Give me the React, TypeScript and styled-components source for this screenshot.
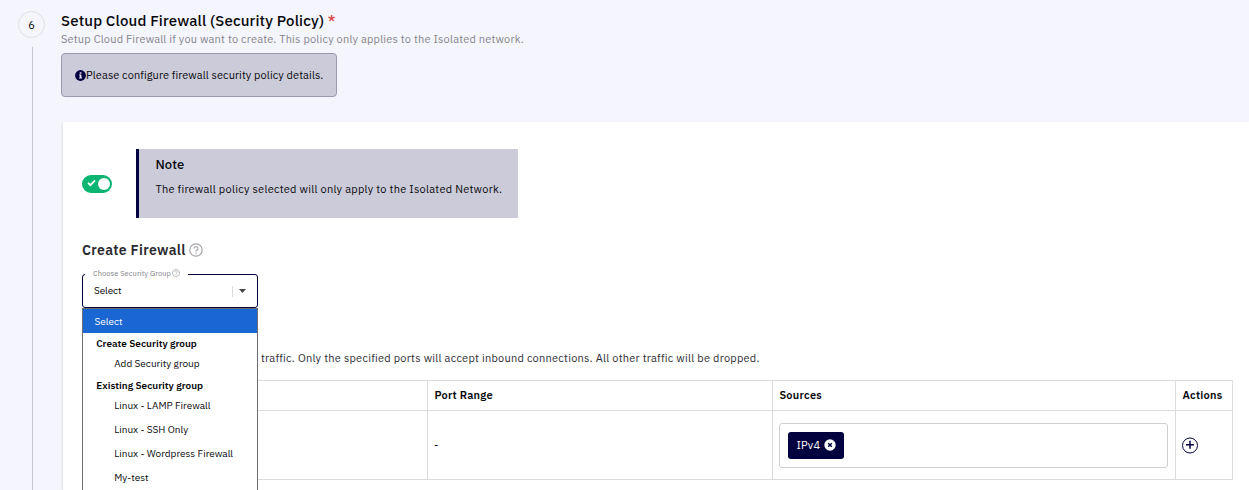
import React from "react";
import styled, { createGlobalStyle } from "styled-components";

const navy = "#02023f";

const GlobalStyle = createGlobalStyle`
  *, *::before, *::after { box-sizing: border-box; }
  body {
    margin: 0;
    background: #f5f5fd;
    color: #08080c;
    font-family: "IBM Plex Sans", Roboto, "Liberation Sans", sans-serif;
    font-size: 11px;
    overflow: hidden;
  }
`;

const Page = styled.div`
  display: flex;
  height: 490px;
  overflow: hidden;
`;

const StepRail = styled.div`
  display: flex;
  flex-direction: column;
  align-items: center;
  width: 27px;
  margin: 11px 16px 0 18px;
`;

const StepNumber = styled.div`
  display: flex;
  align-items: center;
  justify-content: center;
  flex: none;
  width: 27px;
  height: 27px;
  border: 1px solid #dfdfe6;
  border-radius: 50%;
`;

const StepLine = styled.div`
  flex: 1;
  width: 1px;
  margin: 9px 0 0 1px;
  background: #c6c6cb;
`;

const Content = styled.div`
  display: flex;
  flex-direction: column;
  flex: 1;
  min-width: 0;
  padding-top: 11px;
`;

const Line = styled.div<{ $size?: number; $weight?: number; $height: number; $spacing?: number; $color?: string }>`
  font-size: ${(p) => p.$size ?? 11}px;
  font-weight: ${(p) => p.$weight ?? 400};
  line-height: ${(p) => p.$height}px;
  letter-spacing: ${(p) => p.$spacing ?? 0}px;
  color: ${(p) => p.$color ?? "inherit"};
  white-space: nowrap;
`;

const Required = styled.span`
  color: #d9453f;
`;

const InfoAlert = styled.div`
  display: flex;
  align-items: center;
  width: 276px;
  height: 44px;
  margin-top: 6px;
  padding-left: 13px;
  border: 1px solid #9a99b2;
  border-radius: 4px;
  background: #cccbd9;
`;

const Panel = styled.section`
  flex: 1;
  margin: 25px 0 0 2px;
  padding: 27px 16px 0 19px;
  background: #fff;
  box-shadow: -1px 1px 2px rgba(60, 60, 110, 0.1);
`;

const NoteRow = styled.div`
  display: flex;
  align-items: center;
  gap: 24px;
`;

const Toggle = styled.div`
  display: flex;
  align-items: center;
  justify-content: space-between;
  width: 30px;
  height: 18px;
  padding: 0 2px 0 5px;
  border-radius: 9px;
  background: #0ab471;
`;

const CheckMark = styled.svg`
  margin-bottom: 2px;
`;

const Knob = styled.span`
  width: 12px;
  height: 12px;
  border-radius: 50%;
  background: #fff;
`;

const Note = styled.div`
  width: 382px;
  height: 69px;
  padding: 6px 0 0 16.4px;
  border-left: 3px solid ${navy};
  background: #cccbd9;
`;

const SectionHeading = styled.div`
  display: flex;
  align-items: center;
  gap: 3.5px;
  height: 20px;
  margin-top: 22px;
`;

const SelectField = styled.div`
  position: relative;
  display: flex;
  align-items: center;
  width: 176px;
  height: 34px;
  margin-top: 14px;
  padding: 0 11px 0 11px;
  border: 1px solid ${navy};
  border-radius: 3px;
`;

const SelectLabel = styled.div`
  position: absolute;
  top: -7px;
  left: 2px;
  display: flex;
  align-items: center;
  gap: 1px;
  width: 103px;
  height: 10px;
  padding-left: 8px;
  background: #fff;
`;

const Caret = styled.div`
  display: flex;
  align-items: center;
  justify-content: flex-end;
  width: 14px;
  height: 11px;
  margin-left: auto;
  border-left: 1px solid #dcdce0;
`;

const Menu = styled.div`
  position: absolute;
  top: 33px;
  left: -1px;
  z-index: 2;
  width: 176px;
  height: 200px;
  border: 1px solid #6d6d73;
  background: #fff;
`;

const Option = styled.div<{ $kind: "selected" | "group" | "item"; $height: number }>`
  display: flex;
  align-items: center;
  height: ${(p) => p.$height}px;
  padding-top: ${(p) => (p.$kind === "selected" ? 2 : 0)}px;
  padding-left: ${(p) => ({ selected: 11.4, group: 13.2, item: 31.2 })[p.$kind]}px;
  color: ${(p) => (p.$kind === "selected" ? "#fff" : "#08080c")};
  background: ${(p) => (p.$kind === "selected" ? "#1a66d2" : "transparent")};
`;

const Hint = styled.div`
  margin: 42px 0 0 179px;
`;

const Table = styled.div`
  display: grid;
  grid-template-columns: 345px 345px 403px 57px;
  grid-template-rows: 30px 69px;
  width: 1151px;
  margin-top: 14px;
  border-top: 1px solid #dcdcdc;
  border-left: 1px solid #dcdcdc;
`;

const Cell = styled.div<{ $header?: boolean }>`
  display: flex;
  align-items: center;
  padding: 0 7px ${(p) => (p.$header ? 2 : 0)}px ${(p) => (p.$header ? 6.4 : 6)}px;
  border-right: 1px solid #dcdcdc;
  border-bottom: 1px solid #dcdcdc;
`;

const TagInput = styled.div`
  display: flex;
  align-items: center;
  flex: 1;
  height: 45px;
  padding-left: 8px;
  border: 1px solid #cfcfd2;
  border-radius: 3px;
`;

const Tag = styled.div`
  display: flex;
  align-items: center;
  gap: 4px;
  width: 56px;
  height: 27px;
  padding-left: 8.4px;
  border-radius: 3px;
  color: #fff;
  background: ${navy};
`;

const HelpIcon = ({ size, width }: { size: number; width: number }) => (
  <svg width={size} height={size} viewBox="0 0 14 14" fill="none" stroke="#a5a5aa" strokeWidth={width}>
    <circle cx="7" cy="7" r="6.2" />
    <path d="M5 5.6a2 1.8 0 1 1 2.9 1.5c-.7.4-.9.7-.9 1.3" />
    <path d="M7 9.4v1.3" />
  </svg>
);

const InfoIcon = () => (
  <svg width="11" height="11" viewBox="0 0 11 11">
    <circle cx="5.5" cy="5.5" r="5.4" fill={navy} />
    <path d="M4.7 2.2h1.7v1.5H4.7zM4.1 4.5h2.3v3h.6v1.1H4.1V7.5h.6v-2h-.6z" fill="#e6e5f0" />
  </svg>
);

const options = [
  { kind: "selected", text: "Select", height: 24 },
  { kind: "group", text: "Create Security group", height: 22 },
  { kind: "item", text: "Add Security group", height: 18 },
  { kind: "group", text: "Existing Security group", height: 26 },
  { kind: "item", text: "Linux - LAMP Firewall", height: 14 },
  { kind: "item", text: "Linux - SSH Only", height: 34 },
  { kind: "item", text: "Linux - Wordpress Firewall", height: 14 },
  { kind: "item", text: "My-test", height: 34 },
] as const;

const headers = ["", "Port Range", "Sources", "Actions"];

export default function App() {
  return (
    <Page>
      <GlobalStyle />
      <StepRail>
        <StepNumber>6</StepNumber>
        <StepLine />
      </StepRail>
      <Content>
        <Line $size={15} $weight={500} $height={20} $spacing={0.16}>
          Setup Cloud Firewall (Security Policy) <Required>*</Required>
        </Line>
        <Line $height={16} $spacing={0.19} $color="#85858c">
          Setup Cloud Firewall if you want to create. This policy only applies to the Isolated network.
        </Line>
        <InfoAlert>
          <InfoIcon />
          <Line $height={16} $spacing={0.08}>Please configure firewall security policy details.</Line>
        </InfoAlert>
        <Panel>
          <NoteRow>
            <Toggle>
              <CheckMark width="9" height="8" viewBox="0 0 9 8" fill="none" stroke="#fff" strokeWidth="1.8">
                <path d="M1 3.8 3.4 6.2 8 1.4" />
              </CheckMark>
              <Knob />
            </Toggle>
            <Note>
              <Line $size={13} $weight={500} $height={20} $spacing={0.1}>Note</Line>
              <Line $height={29} $spacing={0.25}>The firewall policy selected will only apply to the Isolated Network.</Line>
            </Note>
          </NoteRow>
          <SectionHeading>
            <Line $size={14} $weight={600} $height={20} $spacing={0.33} $color="#28282f">Create Firewall</Line>
            <HelpIcon size={14} width={1.2} />
          </SectionHeading>
          <SelectField>
            <SelectLabel>
              <Line $size={7.5} $height={10} $spacing={0.05} $color="#85858c">Choose Security Group</Line>
              <HelpIcon size={8} width={1.3} />
            </SelectLabel>
            <Line $size={10} $height={14} $spacing={-0.1}>Select</Line>
            <Caret>
              <svg width="7" height="4" viewBox="0 0 7 4"><path d="M0 0h7L3.5 4z" fill="#46464b" /></svg>
            </Caret>
            <Menu>
              {options.map((o) => (
                <Option key={o.text} $kind={o.kind} $height={o.height}>
                  <Line $size={10} $weight={o.kind === "group" ? 600 : 400} $height={14}>
                    {o.text}
                  </Line>
                </Option>
              ))}
            </Menu>
          </SelectField>
          <Hint>
            <Line $height={16} $spacing={0.245} $color="#2d2d33">
              traffic. Only the specified ports will accept inbound connections. All other traffic will be dropped.
            </Line>
          </Hint>
          <Table>
            {headers.map((h) => (
              <Cell key={h} $header>
                <Line $weight={600} $height={16} $spacing={0.25}>{h}</Line>
              </Cell>
            ))}
            <Cell />
            <Cell><Line $height={16}>-</Line></Cell>
            <Cell>
              <TagInput>
                <Tag>
                  <Line $height={14} $spacing={0.2}>IPv4</Line>
                  <svg width="12" height="12" viewBox="0 0 12 12">
                    <circle cx="6" cy="6" r="5.7" fill="#fff" />
                    <path d="m4.2 4.2 3.6 3.6M7.8 4.2 4.2 7.8" stroke={navy} strokeWidth="1.5" />
                  </svg>
                </Tag>
              </TagInput>
            </Cell>
            <Cell>
              <svg width="16" height="17" viewBox="0 0 16 17" fill="none" stroke={navy}>
                <circle cx="8" cy="8.5" r="7.5" strokeWidth="1" />
                <path d="M8 3.8v8M4 7.8h8" strokeWidth="1.5" />
              </svg>
            </Cell>
          </Table>
        </Panel>
      </Content>
    </Page>
  );
}
